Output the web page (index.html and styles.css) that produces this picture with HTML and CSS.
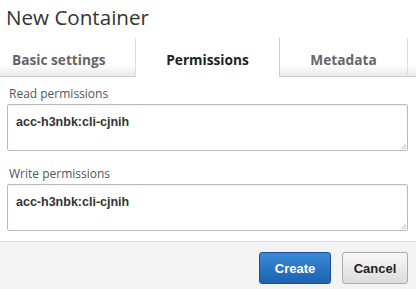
FILE: index.html
```html
<!DOCTYPE html>
<html>
<head>
<meta charset="utf-8">
<link rel="stylesheet" href="styles.css">
</head>
<body>
<div class="dialog">
  <h1 class="title">New Container</h1>
  <div class="tabs">
    <div class="tab tab-basic">Basic settings</div>
    <div class="tab tab-active">Permissions</div>
    <div class="tab tab-meta">Metadata</div>
    <div class="tab tab-rest"></div>
  </div>
  <div class="body">
    <label class="label">Read permissions</label>
    <div class="area">acc-h3nbk:cli-cjnih<span class="grip"></span></div>
    <label class="label">Write permissions</label>
    <div class="area">acc-h3nbk:cli-cjnih<span class="grip"></span></div>
  </div>
  <div class="footer">
    <button class="btn btn-primary">Create</button>
    <button class="btn btn-default">Cancel</button>
  </div>
</div>
</body>
</html>
```
FILE: styles.css
```css
html, body { margin: 0; padding: 0; background: #fff; }
body { width: 416px; height: 289px; overflow: hidden; font-family: "Open Sans", sans-serif; }
.dialog { display: flex; flex-direction: column; height: 289px; }
.title { margin: 0; padding: 3px 0 0 6px; height: 38px; box-sizing: border-box; font-size: 20.6px; font-weight: 400; color: #333; line-height: 28px; flex: none; }
.tabs { display: flex; height: 39px; flex: none; }
.tab { height: 39px; box-sizing: border-box; display: flex; align-items: center; justify-content: center; font-size: 13.7px; font-weight: 700; color: #666; padding-top: 4px; }
.tab-basic { width: 136px; justify-content: flex-start; padding-left: 12px; border-right: 1px solid #ddd; border-bottom: 1px solid #ccc; background: linear-gradient(#fff 70%, #e9e9e9); }
.tab-active { width: 143px; color: #222; background: #fff; border-bottom: 1px solid transparent; }
.tab-meta { width: 129px; border-left: 1px solid #ccc; border-right: 1px solid #ddd; border-bottom: 1px solid #ccc; background: linear-gradient(#fff 70%, #e9e9e9); }
.tab-rest { flex: 1; border-bottom: 1px solid #ccc; background: linear-gradient(#fff 70%, #e9e9e9); }
.body { flex: 1; min-height: 0; padding: 7px 8px 0 7px; display: flex; flex-direction: column; }
.label { font-size: 12px; color: #555; padding-left: 2px; line-height: 20px; height: 20px; flex: none; }
.area { position: relative; flex: none; height: 47px; box-sizing: border-box; border: 1px solid #bbb; border-radius: 2px; font-family: "Liberation Sans", Arial, sans-serif; font-weight: 700; font-size: 12.5px; color: #333; padding: 10px 0 0 8px; margin-bottom: 13px; box-shadow: inset 0 1px 2px rgba(0,0,0,0.06); }
.area:last-child { margin-bottom: 0; }
.grip { position: absolute; right: 1px; bottom: 1px; width: 6px; height: 6px; background: radial-gradient(circle, #bbb 0.6px, transparent 0.8px) 0 0 / 2px 2px; clip-path: polygon(100% 0, 100% 100%, 0 100%); }
.footer { height: 48px; flex: none; box-sizing: border-box; border-top: 1px solid #ddd; background: #f3f3f3; display: flex; justify-content: flex-end; align-items: flex-start; padding: 10px 8px 0 0; gap: 11px; }
.btn { height: 32px; margin: 0; font-family: "Liberation Sans", Arial, sans-serif; font-weight: 700; font-size: 13px; border-radius: 3px; cursor: pointer; }
.btn-primary { width: 72px; color: #fff; border: 1px solid #1a4f8f; background: linear-gradient(#3a8ad8, #1c62b0); }
.btn-default { width: 66px; color: #222; border: 1px solid #aaa; background: linear-gradient(#f8f8f8, #dcdcdc); }
```
